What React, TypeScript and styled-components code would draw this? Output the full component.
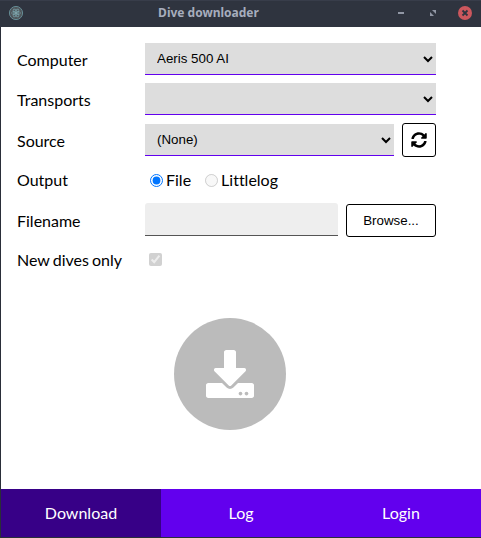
import React from 'react';
import styled, { createGlobalStyle } from 'styled-components';
import { FaDownload, FaSyncAlt } from 'react-icons/fa';

const GlobalStyle = createGlobalStyle`
  * { box-sizing: border-box; }
  body { margin: 0; background: #fff; overflow: hidden; }
`;

const Window = styled.div`
  width: 481px;
  height: 538px;
  display: flex;
  flex-direction: column;
  font: 16px/24px Lato, sans-serif;
  font-variant-ligatures: none;
  word-spacing: -1px;
  color: #000;
`;

const TitleBar = styled.header`
  flex: 0 0 27px;
  display: grid;
  grid-template-columns: 48px 1fr 111px;
  align-items: center;
  padding: 0 9px 3px 8px;
  background: #2f343f;
  border-top: 1px solid #383d4a;
  color: #a6adbd;
`;

const Title = styled.h1`
  margin: 0;
  text-align: center;
  word-spacing: 0;
  font: bold 12px/20px 'Noto Sans', sans-serif;
`;

const WindowControls = styled.div`
  display: flex;
  align-items: center;
  justify-content: flex-end;
  gap: 18px;
`;

const Content = styled.div`
  flex: 1;
  display: flex;
  flex-direction: column;
  border: solid #2a2e39;
  border-width: 0 0 1px 1px;
  min-height: 0;
`;

const Form = styled.main`
  flex: 1;
  padding: 16px 45px 0 16px;
`;

const Row = styled.div<{ $height: number }>`
  display: grid;
  grid-template-columns: 128px 291px;
  align-items: center;
  height: ${(p) => p.$height}px;
  margin-bottom: 8px;
`;

const Label = styled.label<{ $tight?: boolean }>`
  padding-top: ${(p) => (p.$tight ? 0 : 2)}px;
`;

const Field = styled.div`
  display: flex;
  align-items: center;
  gap: 8px;
`;

const Select = styled.select`
  flex: 1;
  min-width: 0;
  height: 32px;
  padding: 0 0 0 8px;
  border: 0;
  border-bottom: 1px solid #6200ee;
  border-radius: 0;
  background-color: #ddd;
  color: #000;
  font: 13.333px 'Liberation Sans', Arial, sans-serif;
`;

const TextInput = styled.input`
  flex: 1;
  min-width: 0;
  height: 33px;
  margin-bottom: 1px;
  border: 0;
  border-bottom: 1px solid #555;
  border-radius: 3px 3px 0 0;
  background: #eee;
`;

const Button = styled.button<{ $width: number; $height: number }>`
  display: flex;
  align-items: center;
  justify-content: center;
  width: ${(p) => p.$width}px;
  height: ${(p) => p.$height}px;
  padding: 0;
  border: 1px solid #000;
  border-radius: 3px;
  background: #fff;
  color: #000;
  font: 13.333px 'Liberation Sans', Arial, sans-serif;
`;

const BrowseButton = styled(Button)`
  margin-top: 1px;
`;

const Options = styled.div`
  display: flex;
  align-items: center;
  gap: 9px;
`;

const Option = styled.label`
  display: flex;
  align-items: center;
  height: 24px;
  line-height: 24px;
`;

const Radio = styled.input.attrs({ type: 'radio' })`
  width: 13px;
  height: 13px;
  margin: 0 3px 0 5px;
`;

const Checkbox = styled.input.attrs({ type: 'checkbox' })`
  width: 13px;
  height: 13px;
  margin: 0 4px 2px;
`;

const DownloadButton = styled.button`
  display: flex;
  align-items: center;
  justify-content: center;
  width: 112px;
  height: 112px;
  margin: 43px 0 0 157px;
  padding: 0;
  border: 0;
  border-radius: 50%;
  background: #bbb;
  color: #fff;
`;

const Tabs = styled.nav`
  flex: 0 0 48px;
  display: grid;
  grid-template-columns: repeat(3, 1fr);
`;

const Tab = styled.button<{ $active?: boolean }>`
  padding: 0;
  border: 0;
  background: ${(p) => (p.$active ? '#370087' : '#6200ee')};
  color: #fff;
  font: 16px/24px Lato, sans-serif;
`;

const AppIcon = () => (
  <svg width="16" height="16" viewBox="0 0 16 16" fill="none">
    <circle cx="8" cy="8" r="6.6" fill="#50565b" stroke="#648b94" />
    <g stroke="#78a5ad" strokeWidth=".65">
      <ellipse cx="8" cy="8" rx="4.5" ry="1.8" />
      <ellipse cx="8" cy="8" rx="4.5" ry="1.8" transform="rotate(60 8 8)" />
      <ellipse cx="8" cy="8" rx="4.5" ry="1.8" transform="rotate(120 8 8)" />
    </g>
    <circle cx="8" cy="8" r="1" fill="#91bbc1" />
  </svg>
);

const MinimizeIcon = () => (
  <svg width="14" height="14" viewBox="0 0 14 14">
    <path d="M4 6h6v2H4z" fill="#9197a5" />
  </svg>
);

const MaximizeIcon = () => (
  <svg width="14" height="14" viewBox="0 0 14 14">
    <path d="M6 4h4v4zM4 6v4h4z" fill="#9197a5" />
  </svg>
);

const CloseIcon = () => (
  <svg width="14" height="14" viewBox="0 0 14 14">
    <circle cx="7" cy="7" r="7" fill="#cc575d" />
    <path d="m4.5 4.5 5 5m0-5-5 5" stroke="#2f343f" strokeWidth="1.8" />
  </svg>
);

export default function App() {
  return (
    <Window>
      <GlobalStyle />
      <TitleBar>
        <AppIcon />
        <Title>Dive downloader</Title>
        <WindowControls>
          <MinimizeIcon />
          <MaximizeIcon />
          <CloseIcon />
        </WindowControls>
      </TitleBar>
      <Content>
        <Form>
          <Row $height={32}>
            <Label>Computer</Label>
            <Field>
              <Select>
                <option>Aeris 500 AI</option>
              </Select>
            </Field>
          </Row>
          <Row $height={32}>
            <Label>Transports</Label>
            <Field>
              <Select />
            </Field>
          </Row>
          <Row $height={34}>
            <Label>Source</Label>
            <Field>
              <Select>
                <option>(None)</option>
              </Select>
              <Button $width={34} $height={34} aria-label="Refresh sources">
                <FaSyncAlt size={16} />
              </Button>
            </Field>
          </Row>
          <Row $height={30}>
            <Label $tight>Output</Label>
            <Options>
              <Option>
                <Radio name="output" defaultChecked />
                File
              </Option>
              <Option>
                <Radio name="output" disabled />
                Littlelog
              </Option>
            </Options>
          </Row>
          <Row $height={34}>
            <Label>Filename</Label>
            <Field>
              <TextInput readOnly />
              <BrowseButton $width={90} $height={33}>
                Browse...
              </BrowseButton>
            </Field>
          </Row>
          <Row $height={30}>
            <Label $tight>New dives only</Label>
            <Field>
              <Checkbox defaultChecked disabled />
            </Field>
          </Row>
          <DownloadButton aria-label="Start download">
            <FaDownload size={48} />
          </DownloadButton>
        </Form>
        <Tabs>
          <Tab $active>Download</Tab>
          <Tab>Log</Tab>
          <Tab>Login</Tab>
        </Tabs>
      </Content>
    </Window>
  );
}
